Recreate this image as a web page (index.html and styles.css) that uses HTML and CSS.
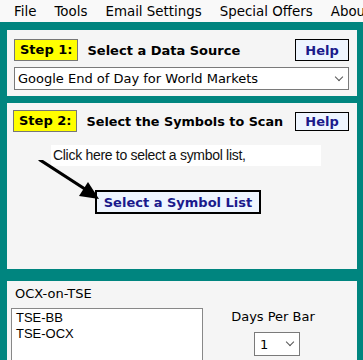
FILE: index.html
```html
<!DOCTYPE html>
<html lang="en">
<head>
    <meta charset="UTF-8">
    <title>Scanner Setup</title>
    <link rel="stylesheet" href="styles.css">
</head>
<body>
    <div class="menubar">
        <span>File</span>
        <span>Tools</span>
        <span>Email Settings</span>
        <span>Special Offers</span>
        <span>About</span>
    </div>

    <div class="main">
        <!-- Step 1 -->
        <div class="panel panel-source">
            <div class="step-row">
                <span class="step-tag">Step 1:</span>
                <span class="step-title">Select a Data Source</span>
                <button class="help-btn">Help</button>
            </div>
            <div class="select wide">
                <span>Google End of Day for World Markets</span>
                <span class="chev"></span>
            </div>
        </div>

        <!-- Step 2 -->
        <div class="panel panel-symbols">
            <div class="step-row">
                <span class="step-tag">Step 2:</span>
                <span class="step-title">Select the Symbols to Scan</span>
                <button class="help-btn small">Help</button>
            </div>
            <div class="pick-area">
                <div class="hint">Click here to select a symbol list,</div>
                <svg class="pointer" width="70" height="45" viewBox="0 0 70 45">
                    <line x1="2" y1="0" x2="50" y2="31" stroke="#000" stroke-width="3.2" stroke-linecap="round"/>
                    <polygon points="61,39 41,36 50,22" fill="#000"/>
                </svg>
                <button class="list-btn">Select a Symbol List</button>
            </div>
        </div>

        <!-- List -->
        <div class="panel panel-list">
            <div class="list-name">OCX-on-TSE</div>
            <div class="list-row">
                <div class="listbox">
                    <div>TSE-BB</div>
                    <div>TSE-OCX</div>
                </div>
                <div class="bar-opts">
                    <div class="bar-label">Days Per Bar</div>
                    <div class="select tiny">
                        <span>1</span>
                        <span class="chev"></span>
                    </div>
                </div>
            </div>
        </div>
    </div>
</body>
</html>
```

FILE: styles.css
```css
body {
    margin: 0;
    height: 360px;
    overflow: hidden;
    background-color: #00857f;
    font-family: "DejaVu Sans", Verdana, sans-serif;
    color: #000;
}
.menubar {
    height: 22px;
    background-color: #f9f9f9;
    display: flex;
    align-items: center;
    gap: 18px;
    padding-left: 14px;
    font-size: 13.4px;
    white-space: nowrap;
    overflow: hidden;
}
.main {
    padding: 8px 6px 0 7px;
    display: flex;
    flex-direction: column;
    gap: 7px;
}
.panel {
    background-color: #f5f5f5;
}
.panel-source {
    height: 66px;
    box-sizing: border-box;
    padding: 9px 8px 0 7px;
}
.panel-symbols {
    height: 166px;
    box-sizing: border-box;
    padding: 7px 8px 0 6px;
    margin-bottom: 5px;
}
.panel-list {
    height: 79px;
    overflow: hidden;
    box-sizing: border-box;
    padding: 5px 0 0 4px;
}
.step-row {
    display: flex;
    align-items: center;
    height: 22px;
}
.step-tag {
    background-color: #ffff00;
    border: 1px solid #777;
    height: 20px;
    line-height: 20px;
    padding: 0 5px;
    font-weight: bold;
    font-size: 13px;
}
.step-title {
    margin-left: 9px;
    font-weight: bold;
    font-size: 13px;
    flex: 1;
}
.panel-symbols .step-title {
    font-size: 12.8px;
}
.help-btn {
    width: 54px;
    height: 22px;
    border: 1px solid #000;
    background-color: #eef5ff;
    color: #1a1a8c;
    font-family: "DejaVu Sans", Verdana, sans-serif;
    font-weight: bold;
    font-size: 13px;
    padding: 0;
}
.help-btn.small {
    height: 19px;
}
.select {
    display: flex;
    align-items: center;
    justify-content: space-between;
    background-color: #fff;
    border: 1px solid #7a7a7a;
    box-sizing: border-box;
    font-size: 13px;
}
.select.wide {
    margin-top: 6px;
    height: 23px;
    padding: 0 6px 0 3px;
}
.select.tiny {
    width: 46px;
    height: 24px;
    padding: 0 6px 0 5px;
    margin-left: 8px;
}
.chev {
    width: 5px;
    height: 5px;
    border-right: 1px solid #555;
    border-bottom: 1px solid #555;
    transform: rotate(45deg);
    margin-top: -4px;
}
.pick-area {
    position: relative;
    padding-top: 13px;
}
.hint {
    margin-left: 38px;
    width: 268px;
    height: 21px;
    line-height: 21px;
    background-color: #fff;
    padding-left: 2px;
    font-family: "Liberation Sans", Arial, sans-serif;
    font-size: 14px;
    letter-spacing: -0.3px;
    color: #111;
}
.pointer {
    position: absolute;
    left: 25px;
    top: 28px;
}
.list-btn {
    display: block;
    margin: 24px 0 0 82px;
    width: 166px;
    height: 24px;
    border: 2px solid #000;
    background-color: #eef5ff;
    color: #1a1a8c;
    font-family: "DejaVu Sans", Verdana, sans-serif;
    font-weight: bold;
    font-size: 13px;
    padding: 0;
}
.list-name {
    font-size: 13px;
    margin-left: 4px;
    height: 20px;
}
.list-row {
    display: flex;
    margin-top: 2px;
}
.listbox {
    width: 192px;
    height: 80px;
    background-color: #fff;
    border: 1px solid #888;
    padding: 1px 0 0 4px;
    box-sizing: border-box;
    font-family: "Liberation Sans", Arial, sans-serif;
    font-size: 13px;
    line-height: 16px;
}
.bar-opts {
    flex: 1;
    display: flex;
    flex-direction: column;
    align-items: center;
    padding-right: 14px;
}
.bar-label {
    font-size: 13px;
    margin-top: 1px;
    margin-bottom: 8px;
}
```
